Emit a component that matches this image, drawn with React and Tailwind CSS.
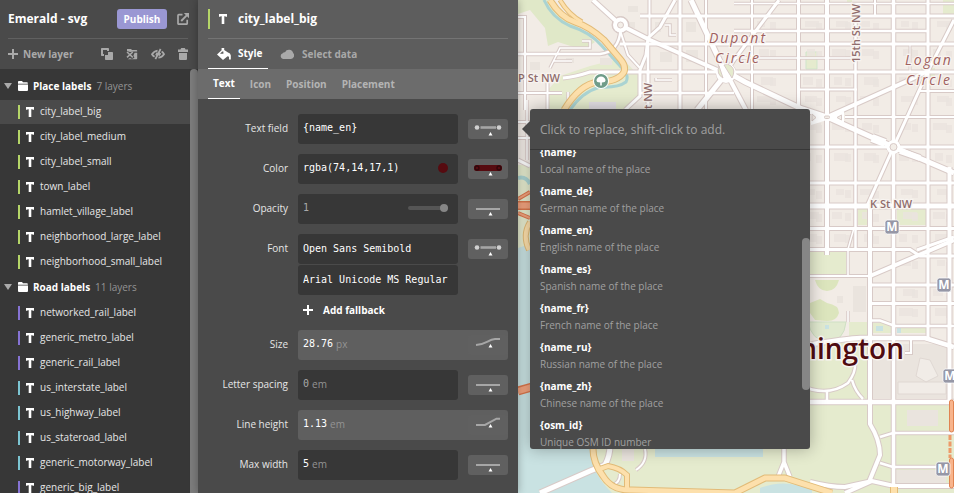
import React from "react";

const SANS = "font-['Open_Sans','Noto_Sans',sans-serif]";
const MONO = "font-['DejaVu_Sans_Mono','Liberation_Mono',monospace]";

const GREEN = "bg-[#b5d568]";
const PURPLE = "bg-[#8673d4]";
const TEAL = "bg-[#7cc5d2]";

const groups = [
  {
    name: "Place labels",
    count: "7 layers",
    layers: [
      ["city_label_big", GREEN],
      ["city_label_medium", GREEN],
      ["city_label_small", GREEN],
      ["town_label", GREEN],
      ["hamlet_village_label", GREEN],
      ["neighborhood_large_label", GREEN],
      ["neighborhood_small_label", GREEN],
    ],
  },
  {
    name: "Road labels",
    count: "11 layers",
    layers: [
      ["networked_rail_label", PURPLE],
      ["generic_metro_label", PURPLE],
      ["generic_rail_label", PURPLE],
      ["us_interstate_label", TEAL],
      ["us_highway_label", TEAL],
      ["us_stateroad_label", TEAL],
      ["generic_motorway_label", TEAL],
      ["generic_big_label", PURPLE],
    ],
  },
];

const tokens = [
  ["{name}", "Local name of the place"],
  ["{name_de}", "German name of the place"],
  ["{name_en}", "English name of the place"],
  ["{name_es}", "Spanish name of the place"],
  ["{name_fr}", "French name of the place"],
  ["{name_ru}", "Russian name of the place"],
  ["{name_zh}", "Chinese name of the place"],
  ["{osm_id}", "Unique OSM ID number"],
];

/* ---------- icons ---------- */

function TextIcon({ className = "" }) {
  return (
    <svg viewBox="0 0 8 10" className={"h-2.5 w-2 shrink-0 fill-white " + className} aria-hidden="true">
      <path d="M0 0h8v2.800H6.700L6.400 2.200H5.300V10H2.700V2.200H1.600L1.300 2.800H0z" />
    </svg>
  );
}

function PlusIcon() {
  return (
    <svg viewBox="0 0 10 10" className="size-2.5 shrink-0 fill-current" aria-hidden="true">
      <path d="M4 0h2v4h4v2H6v4H4V6H0V4h4z" />
    </svg>
  );
}

function FolderIcon() {
  return (
    <svg viewBox="0 0 10 10" className="size-2.5 shrink-0 fill-white" aria-hidden="true">
      <path d="M0 1Q0 0 .8 0H4l1 1.200h4q.8 0 .8.8v.8H0zM0 3.600h10V9q0 1-1 1H1Q0 10 0 9z" />
    </svg>
  );
}

function ShareIcon() {
  return (
    <svg viewBox="0 0 12 12" className="size-3 fill-none stroke-[#a9a9a9]" aria-hidden="true">
      <path d="M5.5 1.7H1.8Q1 1.7 1 2.5v8q0 .7.8.7h7.6q.8 0 .8-.7V6.8" strokeWidth="1.7" />
      <path d="M4.2 8 10 2.2" strokeWidth="1.9" />
      <path d="M6.8 0H12v5.2z" fill="#a9a9a9" stroke="none" />
    </svg>
  );
}

function DuplicateIcon() {
  return (
    <svg viewBox="0 0 12 12" className="size-3 fill-[#a9a9a9]" aria-hidden="true">
      <path d="M.8 0h6.400q.8 0 .8.8V3H6V2H2v4h1v2H.8Q0 8 0 7.200V.8Q0 0 .8 0z" />
      <path d="M4 7h3V4h4.200q.8 0 .8.8v6.400q0 .8-.8.8H4.800q-.8 0-.8-.8z" />
    </svg>
  );
}

function UngroupIcon() {
  return (
    <svg viewBox="0 0 12 12" className="size-3 fill-[#a9a9a9]" aria-hidden="true">
      <path d="M1 1h4l1 1h4.500q.700 0 .700.800V3.500H8L4 4 1 3zM8.600 4.800h2.600v5.600q0 .8-.8.8H1.800L4 10l2 1 2.400-1.200L7.400 7.400z" />
      <path d="m1 4 5.800 5.400M6.800 4 1 9.400" stroke="#a9a9a9" strokeWidth="1.500" />
    </svg>
  );
}

function HideIcon() {
  return (
    <svg viewBox="0 0 14 12" className="h-3 w-3.5 fill-none stroke-[#a9a9a9]" strokeWidth="1.8" aria-hidden="true">
      <path d="M6.600 2.600Q3.200 3 1 6.200q1 1.700 2.600 2.600M10.600 3.600Q12.200 4.600 13 6.200 11 9.400 7.400 9.600" />
      <path d="M9.600 1 4.400 11.200M6.400 4.600 5 7.400M9.400 5 8 7.600" />
    </svg>
  );
}

function TrashIcon() {
  return (
    <svg viewBox="0 0 10 12" className="h-3 w-2.5 fill-[#a9a9a9]" aria-hidden="true">
      <path d="M3.200 0h3.600L7.600 1.400H10V4H0V1.400h2.400zM1 5h8v6q0 1-1 1H2q-1 0-1-1z" />
    </svg>
  );
}

function BucketIcon() {
  return (
    <svg viewBox="0 0 14 12" className="h-3 w-3.5 shrink-0 fill-white" aria-hidden="true">
      <path fillRule="evenodd" d="M4.600 0h2.600v2L11 4.600q2.600.4 2.800 3v3.800h-1.800V8.800l-1.400-.6L6 12 0 6.400l4.600-4.200zm.6 3.600L3 5.800h3.400V3.600z" />
    </svg>
  );
}

function CloudIcon() {
  return (
    <svg viewBox="0 0 14 10" className="h-2.5 w-3.5 shrink-0 fill-[#a9a9a9]" aria-hidden="true">
      <path d="M3 10a3 3 0 0 1-.2-5.800Q3.400 3 5 3.200A4.400 4.400 0 0 1 13.200 4 3.600 3.600 0 0 1 11 10z" />
    </svg>
  );
}

function StopIcon({ kind }) {
  const sloped = kind === "curve" || kind === "ramp";
  return (
    <svg viewBox="0 0 40 20" className="h-5 w-10" aria-hidden="true">
      {kind === "stops" && (
        <g>
          <circle cx="9" cy="8.500" r="2.300" fill="#d0d0d0" />
          <circle cx="31" cy="8.500" r="2.300" fill="#d0d0d0" />
          <path d="M12.500 8.500h15.500" stroke="#a6a6a6" strokeWidth="2.600" />
        </g>
      )}
      {kind === "color" && (
        <g>
          <rect x="6" y="6" width="28" height="6" rx="2.500" fill="#560b10" />
          <circle cx="9" cy="9" r="2" fill="none" stroke="#30060a" strokeWidth="1.300" />
          <circle cx="31" cy="9" r="2" fill="none" stroke="#30060a" strokeWidth="1.300" />
        </g>
      )}
      {kind === "line" && <path d="M8 10h24" stroke="#a6a6a6" strokeWidth="2" />}
      {kind === "curve" && <path d="M8 10q6-.5 11-3.200T27 4h5" fill="none" stroke="#a6a6a6" strokeWidth="2" />}
      {kind === "ramp" && <path d="M8 10h9l11.500-6.300H32" fill="none" stroke="#a6a6a6" strokeWidth="2" />}
      <path d={sloped ? "m22.500 9 2 3.500h-4z" : "m22.500 13 2 3.500h-4z"} fill="#fff" />
    </svg>
  );
}

/* ---------- sidebar ---------- */

function Sidebar() {
  return (
    <aside className="flex w-[198px] shrink-0 flex-col bg-[#373737]">
      <header className="h-[69px] shrink-0 bg-[#4a4a4a] px-2 text-[#a9a9a9]">
        <div className="flex h-[38px] items-center">
          <h1 className="flex-1 text-xs font-bold text-white">Emerald - svg</h1>
          <button className="mr-2.5 h-5 w-[50px] rounded-[3px] bg-[#9a97d3] text-[10px] font-bold text-white">Publish</button>
          <button aria-label="Share" className="mr-px"><ShareIcon /></button>
        </div>
        <div className="mr-0.5 flex h-[31px] items-center border-t border-[#606060]">
          <button className="flex items-center gap-[5px] text-[10px] font-bold">
            <PlusIcon />
            New layer
          </button>
          <div className="ml-auto flex items-center gap-[13px]">
            <button aria-label="Duplicate layer"><DuplicateIcon /></button>
            <button aria-label="Ungroup layers"><UngroupIcon /></button>
            <button aria-label="Hide layer"><HideIcon /></button>
            <button aria-label="Delete layer"><TrashIcon /></button>
          </div>
        </div>
      </header>
      <div className="flex min-h-0 flex-1">
        <nav className="min-w-0 flex-1 overflow-hidden pt-[5px]">
          {groups.map((g) => (
            <section key={g.name}>
              <button className="mb-0.5 flex h-6 w-full items-center gap-[5px] pl-1 text-[10px]">
                <svg viewBox="0 0 8 6" className="mr-px h-1.5 w-2 fill-[#a9a9a9]" aria-hidden="true">
                  <path d="M0 0h8L4 6z" />
                </svg>
                <FolderIcon />
                <span className="font-bold text-white">{g.name}</span>
                <span className="text-[#949494]">{g.count}</span>
              </button>
              {g.layers.map(([name, bar]) => (
                <button
                  key={name}
                  className={
                    "mb-px flex h-6 w-full items-center pl-[18px] text-[10px] text-[#e6e6e6] " +
                    (name === "city_label_big" ? "bg-[#4a4a4a]" : "")
                  }
                >
                  <span className={"h-3.5 w-0.5 " + bar} />
                  <TextIcon className="mr-1.5 ml-1.5" />
                  <span className="pb-0.5">{name}</span>
                </button>
              ))}
            </section>
          ))}
        </nav>
        <div className="w-2 rounded-t bg-[#7c7c7c]" />
      </div>
    </aside>
  );
}

/* ---------- property panel ---------- */

const BOX = "flex h-[30px] items-center rounded-[3px] bg-[#373737] px-[5px] pb-0.5 text-white " + MONO + " text-[10px] leading-5";

function Field({ id, label, children }) {
  return (
    <div className="flex gap-2.5">
      <label htmlFor={id} className="h-[30px] w-20 grow text-right text-[10px] leading-[29px] text-[#e6e6e6]">{label}</label>
      {children}
    </div>
  );
}

function StopButton({ kind, label }) {
  return (
    <button type="button" aria-label={label} className="my-[5px] h-5 w-10 shrink-0 rounded-[3px] bg-[#606060]">
      <StopIcon kind={kind} />
    </button>
  );
}

function UnitValue({ id, value, unit, dim }) {
  return (
    <>
      <input
        id={id}
        defaultValue={value}
        style={{ width: value.length + "ch" }}
        className={"mr-[3px] bg-transparent outline-none " + (dim ? "text-[#a9a9a9]" : "text-white")}
      />
      <span className={SANS + " text-[10px] text-[#949494]"}>{unit}</span>
    </>
  );
}

function Panel() {
  return (
    <section className="relative z-10 flex w-80 shrink-0 flex-col bg-[#4a4a4a] shadow-[0_0_8px_rgba(0,0,0,0.3)]">
      <header className="h-[69px] shrink-0 bg-[#5d5d5d] px-2.5">
        <div className="flex h-[38px] items-center">
          <span className={"h-5 w-0.5 " + GREEN} />
          <TextIcon className="mr-[11px] ml-[9px]" />
          <h2 className="text-xs font-bold text-white">city_label_big</h2>
        </div>
        <div className="flex h-[31px] border-t border-[#747474] text-[10px] font-bold" role="tablist">
          <button role="tab" aria-selected="true" className="flex w-[60px] items-center gap-[7px] border-b border-white pl-[9px] text-white">
            <BucketIcon />
            Style
          </button>
          <button role="tab" aria-selected="false" className="ml-3 flex items-center gap-2 text-[#a9a9a9]">
            <CloudIcon />
            Select data
          </button>
        </div>
      </header>
      <div className="flex h-[30px] shrink-0 gap-[5px] bg-[#6c6c6c] px-2.5 text-[10px] font-bold text-[#b4b4b4]" role="tablist">
        <button role="tab" aria-selected="true" className="border-b border-white px-[5px] text-white">Text</button>
        <button role="tab" aria-selected="false" className="px-[5px]">Icon</button>
        <button role="tab" aria-selected="false" className="px-[5px]">Position</button>
        <button role="tab" aria-selected="false" className="px-[5px]">Placement</button>
      </div>
      <form className="flex min-h-0 flex-1 flex-col gap-2.5 overflow-hidden px-2.5 pt-[15px]">
        <Field id="text-field" label="Text field">
          <div className={BOX + " w-40"}>
            <input id="text-field" defaultValue="{name_en}" className="h-5 min-w-0 flex-1 bg-transparent outline-none" />
          </div>
          <StopButton kind="stops" label="Text field stops" />
        </Field>
        <Field id="color" label="Color">
          <div className={BOX + " w-40"}>
            <input id="color" defaultValue="rgba(74,14,17,1)" className="min-w-0 flex-1 bg-transparent outline-none" />
            <button type="button" aria-label="Pick color" className="mr-[5px] size-2.5 rounded-full bg-[#560b10]" />
          </div>
          <StopButton kind="color" label="Color stops" />
        </Field>
        <Field id="opacity" label="Opacity">
          <div className={BOX + " w-40"}>
            <input id="opacity" defaultValue="1" className="min-w-0 flex-1 bg-transparent text-[#a9a9a9] outline-none" />
            <input
              type="range"
              aria-label="Opacity slider"
              defaultValue="100"
              className="mr-[5px] h-1 w-10 appearance-none rounded-full bg-[#555555] [&::-webkit-slider-thumb]:size-2 [&::-webkit-slider-thumb]:appearance-none [&::-webkit-slider-thumb]:rounded-full [&::-webkit-slider-thumb]:bg-[#868686]"
            />
          </div>
          <StopButton kind="line" label="Opacity stops" />
        </Field>
        <Field id="font" label="Font">
          <div className="flex w-40 flex-col gap-px">
            <input id="font" defaultValue="Open Sans Semibold" className={BOX} />
            <input aria-label="Fallback font" defaultValue="Arial Unicode MS Regular" className={BOX} />
            <button type="button" className="flex h-6 items-center gap-2.5 pt-1 pl-[5px] text-[10px] font-bold text-white">
              <PlusIcon />
              Add fallback
            </button>
          </div>
          <StopButton kind="stops" label="Font stops" />
        </Field>
        <Field id="size" label="Size">
          <div className="flex h-[30px] w-[210px] rounded-[3px] bg-[#5f5f5f]">
            <div className={BOX + " flex-1 bg-transparent"}>
              <UnitValue id="size" value="28.76" unit="px" />
            </div>
            <StopButton kind="curve" label="Size stops" />
          </div>
        </Field>
        <Field id="letter-spacing" label="Letter spacing">
          <div className={BOX + " w-40"}>
            <UnitValue id="letter-spacing" value="0" unit="em" dim />
          </div>
          <StopButton kind="line" label="Letter spacing stops" />
        </Field>
        <Field id="line-height" label="Line height">
          <div className="flex h-[30px] w-[210px] rounded-[3px] bg-[#5f5f5f]">
            <div className={BOX + " flex-1 bg-transparent"}>
              <UnitValue id="line-height" value="1.13" unit="em" />
            </div>
            <StopButton kind="ramp" label="Line height stops" />
          </div>
        </Field>
        <Field id="max-width" label="Max width">
          <div className={BOX + " w-40"}>
            <UnitValue id="max-width" value="5" unit="em" />
          </div>
          <StopButton kind="line" label="Max width stops" />
        </Field>
      </form>
    </section>
  );
}

/* ---------- map ---------- */

const roads = [
  // [path, width]
  ["M752 0V110", 2], ["M798.500 0V110", 3], ["M827 0V255", 4], ["M855.500 15V250", 2.500],
  ["M893.500 0V493", 3.500], ["M928 0V338", 3], ["M949.500 167V400", 4], ["M875 0V16", 2],
  ["M870 206V424Q880 440 880 455L869 482", 4], ["M910 45V72", 1],
  ["M734 3.500H954", 1.500], ["M640 16H954", 3], ["M734 31H927", 2.500], ["M518 54H600Q619 52 620.500 30", 2.500],
  ["M620 44H954", 3], ["M734 58H855", 1.500], ["M563 78Q575 77 590 72H954", 3], ["M798 89.500H857", 2],
  ["M845 117H954", 2], ["M920 91H954", 2], ["M800 147H954", 3], ["M800 183H954", 3], ["M800 206H954", 5],
  ["M800 228.500H954", 3], ["M800 249.500H910L920 256H954", 3], ["M800 276H870", 2], ["M870 285H954", 3],
  ["M870 303.500H954", 3], ["M870 320.500H880L895 326H954", 2.500], ["M800 346Q850 338 860 338H925L954 347", 4.500],
  ["M911 340V353H905", 2], ["M800 402H954", 4.500], ["M880 437L893 433H954", 2.500], ["M880 463L893 467H954", 2.500],
  ["M854 228L848 249V276", 1.500],
  ["M722 69L745 82L800 108L827 117L893.500 147L954 173", 5], ["M827 117L905 82L928 71", 4],
  ["M954 20L928 71L893.500 147L867 206", 3], ["M779 0L734 60L726 72", 3], ["M870 276L954 240", 4],
  ["M917 250L954 237", 3], ["M885 143L872 138", 8], ["M900 151L920 158", 6],
  ["M593 0L620.500 25L650 40L724 73", 4], ["M691 0L726 74L697 110", 5], ["M728 76L746 110", 4],
  ["M675 0L660 27L648 38L646 55L640 70V96L625 110", 3], ["M649.500 0V36", 2], ["M648 44V72", 2.500],
  ["M680 0V110", 3], ["M706 0V110", 2], ["M620 30L628 55L640 68", 2], ["M518 93H562", 2], ["M518 17H525V110", 2],
  ["M547.500 83V110", 2], ["M550 68L560 48H590V41H582M553 61H572", 1.500], ["M640 93H734", 2.500],
  ["M656 78V80H672M665 25H670V35H676", 1.500], ["M518 122H530M518 138H530", 2], ["M527 100V160", 1.500],
  ["M518 160L530 166", 3], ["M648 72V110", 3], ["M568 92V110", 1.500],
  ["M800 385Q827 398 848 383Q856 372 855 364M852 380Q855 391 863 399M827 392V402", 2.500],
  ["M848 311V322", 1.500], ["M540 493L590 471L605 465Q610 456 610 445", 5], ["M645 449Q648 462 636 470", 2],
  ["M620 474Q620 483 612 485", 2], ["M784 440V462L778 477M784 462L790 477", 3.500],
  ["M810 482Q830 487 845 487L872 481L894 486H954M845 493L872 481", 4],
];

const trunks = [
  ["M550 0Q560 17 575 22Q590 27 604 40L621 60Q626 66 624 72Q618 82 598 82Q580 84 564 110", 5],
  ["M560 0Q568 14 582 22", 3],
  ["M593 445Q592 462 603 476Q612 491 632 490L735 493L765 478H785L832 493", 5],
  ["M597 470L608 466Q620 468 627 475V490", 4],
  ["M894 493V487", 6],
  ["M530 222Q522 235 529 250", 4],
];

const blocks = [];
[757, 803, 832, 860, 899, 933].forEach((x, i) => {
  [20, 48, 76, 95, 122, 152, 188, 211, 233, 259, 288, 307].forEach((y, j) => {
    if (x === 757 && y > 100) return;
    if ((x < 870 || y > 340) && y > 240) return;
    blocks.push([x + ((i + j) % 3) * 2, y + 1, 8 + ((i * 3 + j) % 4) * 2, 6 + (j % 3)]);
    blocks.push([x + 13, y + 2 + (i % 2), 6, 8]);
  });
});

const metros = [[892, 227], [944, 285], [950, 376], [943, 469]];

const HALO = { paintOrder: "stroke" };

function MapCanvas() {
  return (
    <svg viewBox="518 0 436 493" preserveAspectRatio="xMinYMin slice" className={"block h-full w-full " + SANS} role="img" aria-label="Map of Washington">
      <rect x="518" width="2000" height="2000" fill="#f2ece6" />
      <g fill="#e5ebce">
        <path d="M518 0H552L575 25L595 42L583 50L558 42L548 46L545 28L530 10L518 14z" fill="#e0e8c8" />
        <path d="M560 76L590 66L622 58L641 78V92L625 110H548V90z" />
        <path d="M518 165H530V260H518z" />
        <path d="M806 52H817V69H806zM858 209H867V225H858zM897 209H926V225H897zM943 0H954V14H943zM847 0H852V3H847zM800 252H846V274H800z" />
        <path d="M921 68H935V76H921zM800 341H868V400H800zM849 322H868V336H849z" />
        <path d="M590 404H868L878 440L880 455L868 484H954V493H590z" />
        <path d="M868 404H954V484H868zM872 323H892V333H872zM897 328H926V333H897z" />
      </g>
      <path d="M589 102H616V110H589z" fill="#e3dfe4" />
      <path d="M806 52H817V69H806z" fill="none" stroke="#cfe5cb" />
      <path d="M815 280H839Q836 291 827 291T815 280zM810 303L820 299L827 303Q839 305 839 313Q836 322 826 321L815 320L810 313z" fill="#dce5bd" />
      <path d="M800 322H846Q844 342 827 341Q812 341 808 322z" fill="#e1ead0" stroke="#cfe0c4" />
      <g fill="#eae4de">
        <path d="M907 410H938V426H907zM622 449H634V461H622zM853 286H866V312H853zM872 343H892V398H872zM896 344H948V398H896zM896 470H946V484H896zM837 296H843V303H837z" />
        {blocks.map(([x, y, w, h], i) => (
          <rect key={i} x={x} y={y} width={w} height={h} opacity="0.8" />
        ))}
        <path d="M530 62h10v8h-10zM566 58h8v5h-8zM600 58h12v7h-12zM628 6h10v6h-10zM655 22h6v10h-6zM686 22h10v10h-10zM686 50h12v12h-12zM660 52h12v10h-12zM625 22h10v6h-10z" />
      </g>
      <path d="M898 382H946V394H898zM920 358L930 360L938 376L926 382L916 376z" fill="#f1ece7" stroke="#e0d8d3" />
      <g fill="#c9e2e2">
        <path d="M518 248L530 244V445H593Q588 470 612 493H518z" />
        <path d="M655 445H763V457H655zM760 488Q785 478 812 490V493H760zM876 326H883V331H876zM897 328H901V333H897zM825 325H829V329H825z" />
      </g>
      <path d="M544 0Q552 18 570 26Q590 32 602 46L620 66Q630 74 626 82Q618 88 600 87Q582 92 570 110" fill="none" stroke="#aad3d2" strokeWidth="3" />
      <path d="M518 178Q526 176 530 184" fill="none" stroke="#aad3d2" strokeWidth="4" />

      <g fill="none" stroke="#d8cac7">
        {roads.map(([d, w]) => <path key={d} d={d} strokeWidth={w + 2} />)}
        <circle cx="893.500" cy="147" r="7" fill="#d8cac7" />
        <circle cx="726" cy="73" r="10" fill="#d8cac7" />
        <circle cx="620.500" cy="25" r="8.500" fill="#d8cac7" />
      </g>
      <path d="M811 110L827 115L844 111V124L827 120L811 125z" fill="#fff" />
      <g fill="none" stroke="#fff">
        {roads.map(([d, w]) => <path key={d} d={d} strokeWidth={w} />)}
      </g>
      <g fill="#fff">
        <circle cx="893.500" cy="147" r="7" />
        <circle cx="726" cy="73" r="10" />
        <circle cx="620.500" cy="25" r="7.500" />
      </g>
      <g fill="#f3eee8" stroke="#d8cac7">
        <circle cx="893.500" cy="147" r="3.500" />
        <circle cx="620.500" cy="25" r="3" />
        <path d="M812 114L816 117.500L812 121zM841.500 115V120L837 117.500z" />
        <rect x="824.500" y="116" width="5" height="2.500" rx="1" />
      </g>
      <path d="M719 66L723 78Q716 74 719 66zM724 65L732 78Q736 70 731 66Q728 63 724 65z" fill="#e5ebce" stroke="#d8cac7" />

      <g fill="none" stroke="#e2bb78">
        {trunks.map(([d, w]) => <path key={d} d={d} strokeWidth={w + 2} />)}
      </g>
      <g fill="none" stroke="#fde0ac">
        {trunks.map(([d, w]) => <path key={d} d={d} strokeWidth={w} />)}
      </g>
      <g fill="none" stroke="#d9764c">
        <path d="M518 199L530 192M518 213L530 218" strokeWidth="4" />
        <path d="M518 205.500H530M518 391L532 387" strokeWidth="9" />
      </g>
      <g fill="none" stroke="#f2a37e">
        <path d="M518 199L530 192M518 213L530 218" strokeWidth="2" />
        <path d="M518 205.500H530M518 391L532 387" strokeWidth="6" />
      </g>
      <g fill="#f8b48c" stroke="#e08450">
        <rect x="949.500" y="400" width="4" height="32" rx="2" />
        <rect x="949.500" y="458" width="4" height="30" rx="2" />
      </g>
      <path d="M950 435V458" stroke="#ee9a68" strokeWidth="3" strokeDasharray="5 1.500" />

      <circle cx="601" cy="81" r="8" fill="#fff" />
      <circle cx="601" cy="81" r="7" fill="#6f9c89" />
      <path d="M601 76.500q3.500 0 4.500 3.500.3 2.500-3.700 2.500v3h-1.600v-3q-4 0-3.700-2.500 1-3.500 4.500-3.500z" fill="#fff" />

      {metros.map(([x, y]) => (
        <g key={x}>
          <rect x={x - 7} y={y - 7} width="14" height="14" rx="2.500" fill="#9697a6" stroke="#fff" strokeOpacity="0.7" />
          <text x={x} y={y + 4} textAnchor="middle" className="fill-white text-[12px] font-bold">M</text>
        </g>
      ))}

      <g className="fill-[#8f6c6c] stroke-[#f8f4f0] text-[11px] font-semibold" strokeWidth="2.500" style={HALO}>
        <text x="560" y="82" textAnchor="end">P St NW</text>
        <text x="870" y="208">K St NW</text>
        <text transform="translate(860 63) rotate(-90)">15th St NW</text>
        <text transform="translate(652 127) rotate(-90)">21st NW</text>
      </g>
      <g className="fill-[#a0615f] stroke-[#f8f4f0] text-[14px] font-medium tracking-[2px] italic" strokeWidth="2.500" style={HALO} textAnchor="middle">
        <text x="738" y="43">Dupont</text>
        <text x="738" y="63">Circle</text>
        <text x="929" y="65">Logan</text>
        <text x="929" y="85">Circle</text>
      </g>
      <text x="904" y="359" textAnchor="end" strokeWidth="3" style={HALO} className="fill-[#4f0c11] stroke-[#f8f4f0] text-[28px] font-semibold">
        Washington
      </text>
    </svg>
  );
}

function TokenPopup() {
  return (
    <div className="absolute top-[109px] left-3 flex h-[340px] w-[280px] flex-col rounded-[3px] bg-[#4a4a4a] shadow-[0_0_16px_rgba(0,0,0,0.3)]">
      <svg viewBox="0 0 8 16" className="absolute top-3 -left-2 h-4 w-2 fill-[#4a4a4a]" aria-hidden="true">
        <path d="M8 0v16L0 8z" />
      </svg>
      <input
        aria-label="Filter tokens"
        placeholder="Click to replace, shift-click to add."
        className="h-[41px] shrink-0 border-b border-[#373737] px-2.5 text-xs text-white outline-none placeholder:text-[#a0a0a0]"
      />
      <div className="flex min-h-0 flex-1">
        <ul className="-mt-1.5 flex-1 overflow-hidden [clip-path:inset(6px_0_0_0)]">
          {tokens.map(([token, about]) => (
            <li key={token} className="pb-[5px]">
              <button className="block w-full px-2.5 text-left text-[10px] leading-[17px]">
                <span className="block font-bold text-white">{token}</span>
                <span className="block text-[#a0a0a0]">{about}</span>
              </button>
            </li>
          ))}
        </ul>
        <div className="mt-[88px] h-[152px] w-2 rounded-full bg-[#868686]" />
      </div>
    </div>
  );
}

export default function App() {
  return (
    <div className={"flex h-screen overflow-hidden " + SANS}>
      <Sidebar />
      <Panel />
      <main className="relative min-w-0 flex-1">
        <MapCanvas />
        <TokenPopup />
      </main>
    </div>
  );
}
